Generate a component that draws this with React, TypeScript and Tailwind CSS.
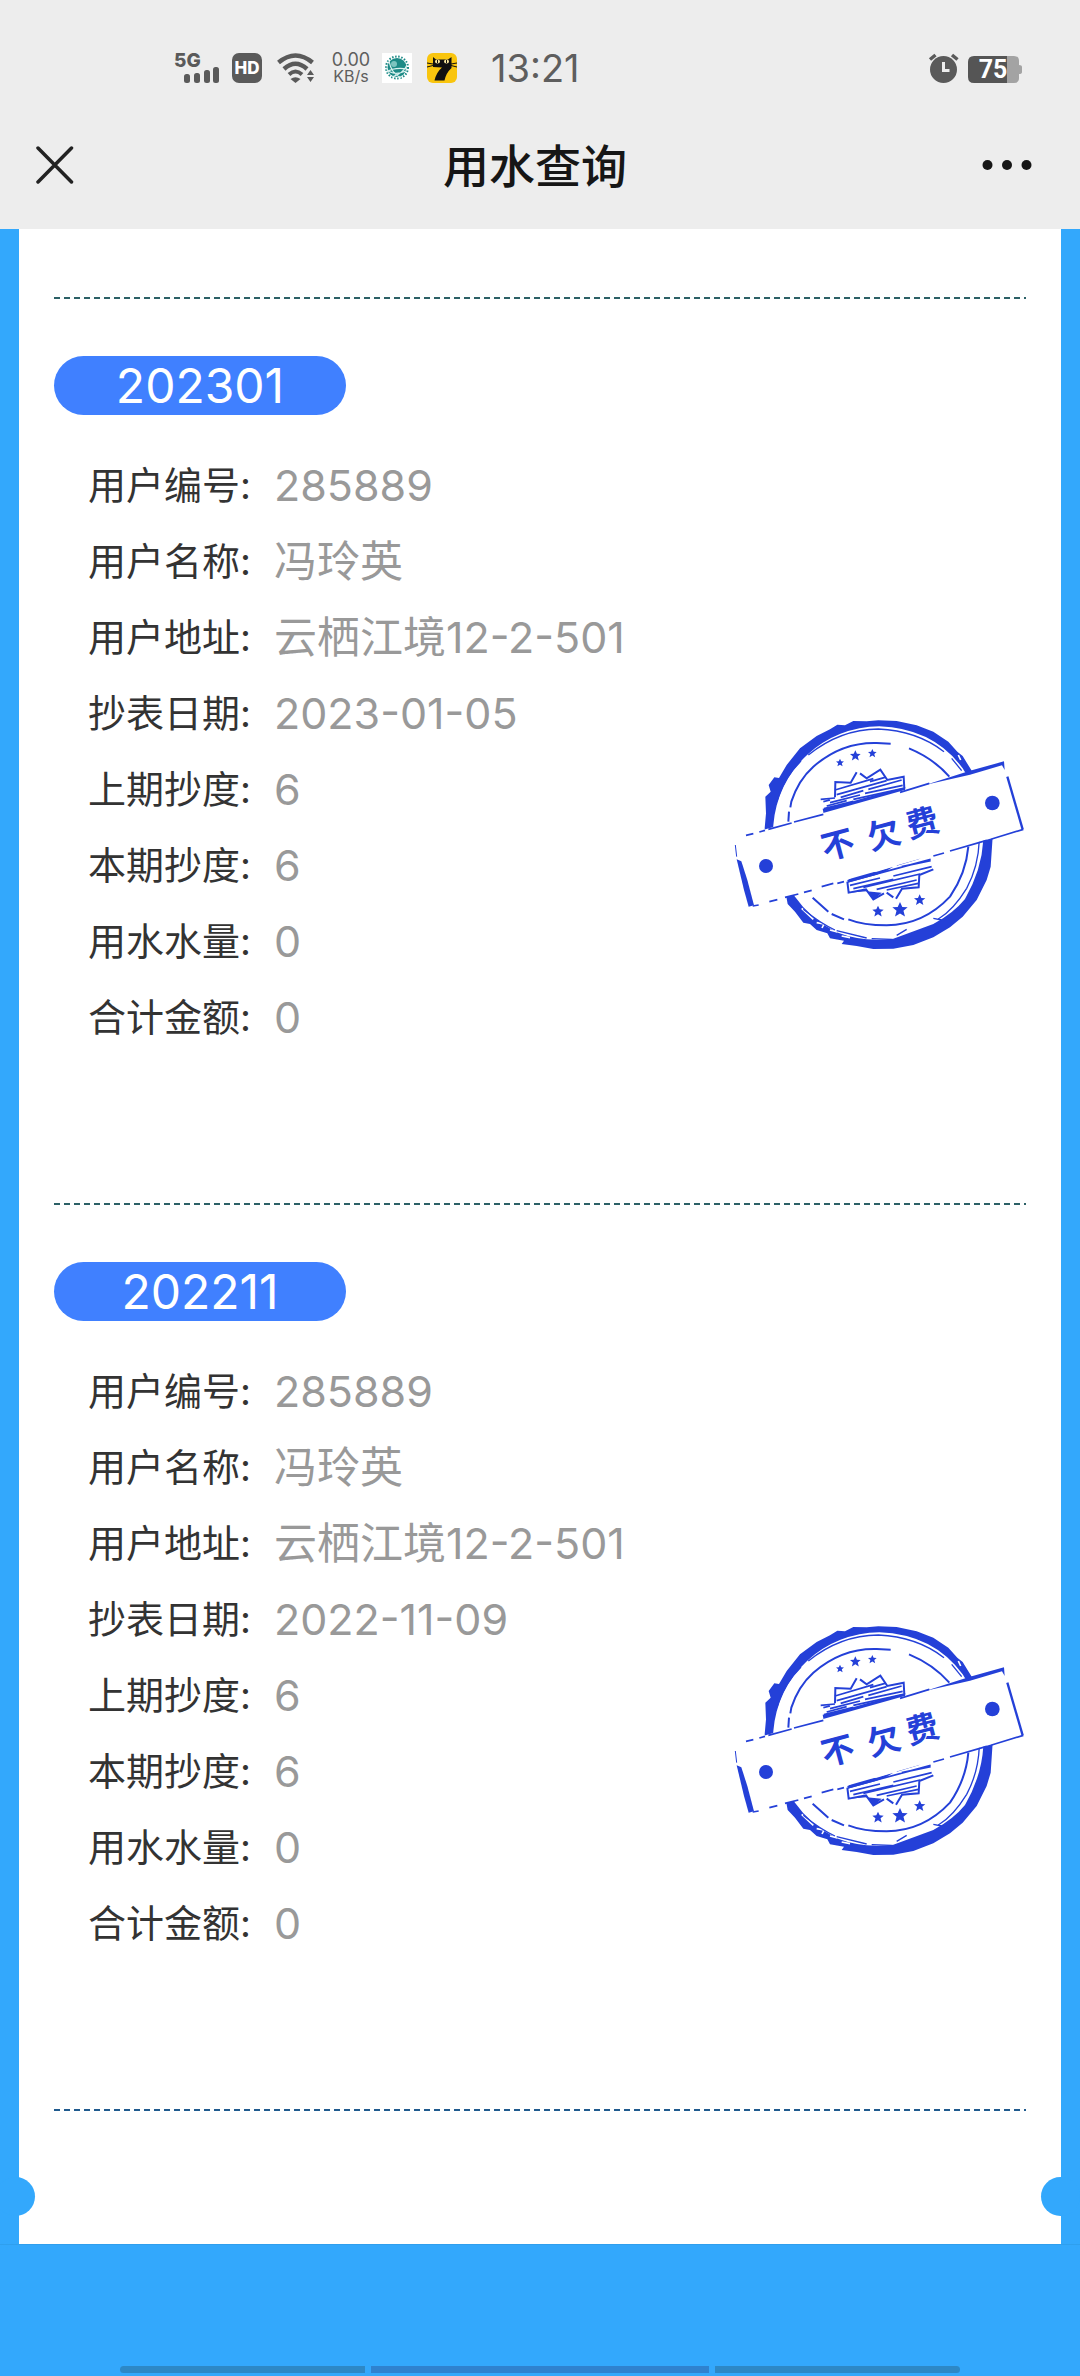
const bills = [
  {
    month: "202301",
    rows: [
      { label: "用户编号", value: "285889" },
      { label: "用户名称", value: "冯玲英" },
      { label: "用户地址", value: "云栖江境12-2-501" },
      { label: "抄表日期", value: "2023-01-05" },
      { label: "上期抄度", value: "6" },
      { label: "本期抄度", value: "6" },
      { label: "用水水量", value: "0" },
      { label: "合计金额", value: "0" },
    ],
  },
  {
    month: "202211",
    rows: [
      { label: "用户编号", value: "285889" },
      { label: "用户名称", value: "冯玲英" },
      { label: "用户地址", value: "云栖江境12-2-501" },
      { label: "抄表日期", value: "2022-11-09" },
      { label: "上期抄度", value: "6" },
      { label: "本期抄度", value: "6" },
      { label: "用水水量", value: "0" },
      { label: "合计金额", value: "0" },
    ],
  },
];

function StatusBar() {
  return (
    <div className="flex items-center justify-between pt-[53px] pl-[174px] pr-[58px] text-[#5e5e5e]">
      <div className="flex items-center h-[30px]">
        <svg className="overflow-visible" width="46" height="30" viewBox="0 0 46 30" fill="#5a5a5a">
          <text x="0" y="14" fontSize="19" fontWeight="800" fontFamily="Inter, sans-serif">5G</text>
          <rect x="10" y="21" width="6" height="9" rx="2.5" />
          <rect x="20" y="20" width="6" height="10" rx="2.5" />
          <rect x="30" y="17" width="6" height="13" rx="2.5" />
          <rect x="39" y="14" width="6" height="16" rx="2.5" />
        </svg>
        <svg className="ml-3" width="30" height="30" viewBox="0 0 30 30">
          <rect width="30" height="30" rx="7" fill="#5a5a5a" />
          <text x="15" y="21" textAnchor="middle" fontSize="17" fontWeight="800" fill="#fff" fontFamily="Inter, sans-serif">HD</text>
        </svg>
        <svg className="ml-[15px]" width="38" height="30" viewBox="0 0 38 30" fill="none" stroke="#5a5a5a">
          <path d="M1.500 9.500Q18.500 -4.500 35.500 9.500" strokeWidth="4.500" />
          <path d="M7 16Q18.500 5.500 30 16" strokeWidth="4.500" />
          <path d="M12 21.500Q18.500 15.500 25 21.500" strokeWidth="4" />
          <path d="M13.500 26Q18.500 22.500 23.500 26L18.500 30Z" fill="#5a5a5a" stroke="none" />
          <path d="M33.500 17L37 22H30ZM33.500 29L37 24H30Z" fill="#5a5a5a" stroke="none" />
        </svg>
        <div className="ml-4 w-[40px] flex flex-col text-center font-['Inter',sans-serif]">
          <span className="text-[18px] leading-[16px]">0.00</span>
          <span className="text-[16px] leading-[16px]">KB/s</span>
        </div>
        <svg className="ml-[11px]" width="30" height="30" viewBox="0 0 30 30">
          <rect width="30" height="30" fill="#fff" />
          <circle cx="15" cy="14.500" r="9.500" fill="#1c8a86" />
          <circle cx="15" cy="14.500" r="11" fill="none" stroke="#1c8a86" strokeWidth="2" strokeDasharray="1.500 1.600" />
          <path d="M4 15Q10 24 24 18M7 8Q9 20 19 25M25 12Q22 20 10 24M5 19Q12 14 25 16" stroke="#d9f1ef" strokeWidth="1.200" fill="none" />
          <circle cx="12" cy="11" r="3" fill="#7cc4bf" />
        </svg>
        <svg className="ml-[15px]" width="30" height="30" viewBox="0 0 30 30">
          <rect width="30" height="30" rx="6" fill="#f9c50e" />
          {/* cat head and body */}
          <path d="M6 4L9 6.500H21L24.500 4V15Q19 20 17.500 27.500H7.500Q9.500 19 15 14.500L6 14Z" fill="#111" />
          <path d="M0 10L6 11M0 14L6 12.500M30 10L24 11M30 14L24 12.500" stroke="#111" strokeWidth="1" />
          <ellipse cx="10.500" cy="8.500" rx="2.500" ry="2" fill="#fbe9a0" />
          <ellipse cx="19.500" cy="8.500" rx="2.500" ry="2" fill="#fbe9a0" />
          <path d="M10.500 7V10M19.500 7V10" stroke="#111" strokeWidth="1" />
        </svg>
        <time className="ml-[34px] text-[38px] leading-[30px] font-normal font-['Inter',sans-serif]">13:21</time>
      </div>
      <div className="flex items-center gap-2">
        <svg width="32" height="30" viewBox="0 0 32 30">
          <circle cx="15.500" cy="16.500" r="13.500" fill="#5a5a5a" />
          <path d="M2 6.500L7.500 2M24 2L29.500 6.500" stroke="#5a5a5a" strokeWidth="3.500" />
          <path d="M15.500 9V17.500H21.500" stroke="#ededed" strokeWidth="3" fill="none" />
        </svg>
        <svg width="54" height="30" viewBox="0 0 54 30">
          <path d="M38 3H46Q51 3 51 8V12Q54 12 54 14V19Q54 21 51 21V25Q51 30 46 30H38Z" fill="#a3a3a3" />
          <path d="M6 3H39V30H6Q0 30 0 24V9Q0 3 6 3Z" fill="#555" />
          <text x="25" y="25" textAnchor="middle" fontSize="25" fontWeight="700" fill="#fff" fontFamily="Roboto, sans-serif">75</text>
        </svg>
      </div>
    </div>
  );
}

function TitleBar() {
  return (
    <div className="flex items-center justify-between px-9 pt-[50px] pb-[30px]">
      <button aria-label="关闭" className="w-[54px]">
        <svg width="38" height="40" viewBox="0 0 38 40" stroke="#222" strokeWidth="3.500" strokeLinecap="round">
          <path d="M2 2L35.500 36M35.500 2L2 36" />
        </svg>
      </button>
      <h1 className="text-[46px] leading-[66px] font-medium text-[#161616]">用水查询</h1>
      <button aria-label="更多" className="w-16 flex justify-end">
        <svg width="62" height="12" viewBox="0 0 62 12" fill="#161616">
          <circle cx="5.500" cy="5" r="5" />
          <circle cx="25" cy="5" r="5" />
          <circle cx="44.500" cy="5" r="5" />
        </svg>
      </button>
    </div>
  );
}

const STAR = "M0 -10L3 -3.500L10 -3L4.500 1.500L6.500 9L0 5L-6.500 9L-4.500 1.500L-10 -3L-3 -3.500Z";

function Stamp() {
  return (
    <svg className="shrink-0" width="306" height="270" viewBox="0 0 918 810" fill="none" stroke="#2440d8">
      {/* outer ring, thicker on the left and at the bottom */}
      <path
        fill="#2440d8"
        stroke="none"
        fillRule="evenodd"
        d="M475 61L530 63L590 76L640 95L685 125L712 155L728 168L745 196L757 215L790 290L808 360L818 410L812 500L800 540L770 600L728 650L690 682L640 712L580 735L520 746L460 747L410 738L365 732L372 722L330 715L322 700L290 690L270 672L250 668L225 635L203 612L198 585L150 460L134 385L138 340L136 290L152 275L146 255L163 232L177 234L200 195L240 145L290 108L330 88L352 74L375 76L400 63L440 64ZM478 79A320 320 0 0 0 160 375A320 320 0 0 0 225 590Q270 655 350 697Q430 728 520 716L640 672Q700 640 735 597Q785 510 790 420Q790 300 728 205Q640 85 478 79Z"
      />
      <path d="M245 625L280 658M290 668L312 672L306 684M330 690L352 696M365 708L390 713M715 165L722 180" stroke="#fff" strokeWidth="5" />
      <path d="M265 165Q360 88 475 87Q590 92 672 155M695 175L725 212M243 183Q190 235 172 300M778 420Q775 500 740 565Q700 630 655 657M250 628Q300 670 345 690M350 692L440 714M455 716L515 718M530 706L560 688M640 655L665 660" strokeWidth="4" />
      <path d="M205 365L207 335M211 322L214 305Q235 240 280 200Q365 126 470 129L512 131M567 145Q640 175 688 230M745 440Q738 520 690 590Q610 675 500 676Q430 676 385 658M278 593L325 635M335 642L372 658" strokeWidth="6" />

      {/* upper burst */}
      <path d="M345 292L346 246L392 248L410 217M420 220L440 235L481 209L502 240L551 230L553 266" strokeWidth="6" />
      <path d="M302 298L345 294M310 305L330 300M345 270L460 236M350 284L500 242M362 292L430 272M445 268L545 240M330 308L420 285M435 280L548 256M320 318L380 302M400 298L550 265M450 245L495 232M312 326L400 304" strokeWidth="5" />
      <path d="M308 326L360 315L440 292L500 276L556 262L553 286L480 308L420 320L370 333L311 342Z" fill="#2440d8" stroke="none" />
      <path d="M370 338L455 324" strokeWidth="3" />

      {/* lower burst */}
      <path d="M382 545L386 578L438 568L460 598L492 580M500 578L520 592M528 596L546 566L596 562L598 525L640 508" strokeWidth="6" />
      <path d="M388 578L440 568L460 600L485 578L440 574Z" fill="#2440d8" stroke="none" />
      <path d="M382 540L420 520L470 515L520 500L500 512L470 524L384 548Z" fill="#2440d8" stroke="none" />
      <path d="M384 545L632 478M390 556L480 534M400 566L520 538M430 562L600 522M470 568L590 540M500 570L595 550M520 528L635 500M470 508L505 498M530 495L600 474M545 500L632 482" strokeWidth="5" />

      <g fill="#2440d8" stroke="none">
        <path transform="translate(360 188) scale(1.200)" d={STAR} />
        <path transform="translate(406 167) scale(1.600)" d={STAR} />
        <path transform="translate(457 160) scale(1.300)" d={STAR} />
        <path transform="translate(474 634) scale(1.700)" d={STAR} />
        <path transform="translate(540 629) scale(2.300)" d={STAR} />
        <path transform="translate(599 600) scale(1.700)" d={STAR} />
      </g>

      {/* banner */}
      <path d="M80 404L852 186L910 388L98 620L48 450Z" fill="#fff" stroke="none" />
      <path d="M78 406L100 401M118 396L135 391M145 388L215 369M222 366L310 343M540 277L628 250M98 618L116 615M148 605L172 599M195 592L235 582M252 577L275 571M305 560L340 550M352 550L372 545M640 468L672 459M690 453L800 421M815 417L910 388" strokeWidth="5" />
      <path d="M618 254L750 212L852 184L854 210L846 196L750 224Z" fill="#2440d8" stroke="none" />
      <path d="M862 230L908 388" strokeWidth="7" />
      <path d="M50 478L64 484L82 540L102 616L86 620L72 570Z" fill="#2440d8" stroke="none" />
      <path d="M46 435L50 470" strokeWidth="3" />
      <circle cx="817" cy="309" r="22" fill="#2440d8" stroke="none" />
      <circle cx="138" cy="498" r="21" fill="#2440d8" stroke="none" />
      <g fill="#2440d8" stroke="none" fontSize="98" fontWeight="700" textAnchor="middle" fontFamily="'Noto Sans CJK SC', sans-serif">
        <text transform="translate(362 468) rotate(-15)">不</text>
        <text transform="translate(500 438) rotate(-15)">欠</text>
        <text transform="translate(616 403) rotate(-15)">费</text>
      </g>
    </svg>
  );
}

function Divider({ last = false }: { last?: boolean }) {
  return (
    <hr
      className={
        last
          ? "h-0.5 border-0 bg-[repeating-linear-gradient(90deg,#1f5a8e_0px,#1f5a8e_6px,transparent_6px,transparent_10px)]"
          : "h-0.5 border-0 bg-[repeating-linear-gradient(90deg,#2b6066_0px,#2b6066_6px,transparent_6px,transparent_10px)]"
      }
    />
  );
}

export default function App() {
  return (
    <div className="min-h-screen flex flex-col bg-[#33a8fc] font-['Inter','Noto_Sans_CJK_SC',sans-serif]">
      <header className="bg-[#ededed]">
        <StatusBar />
        <TitleBar />
      </header>

      <main className="relative mx-[19px] bg-white px-[35px] pt-[68px] pb-[133px]">
        {bills.map((bill) => (
          <section key={bill.month}>
            <Divider />
            <h2 className="mt-[57px] w-[292px] rounded-full bg-[#4080ff] text-center text-[48px] leading-[59px] font-normal text-white">{bill.month}</h2>
            <div className="mt-8 mb-[148px] flex items-start justify-between">
              <dl className="pl-[34px]">
                {bill.rows.map((row) => (
                  <div key={row.label} className="flex items-center whitespace-nowrap leading-[76px]">
                    <dt className="w-[186px] text-[38px] text-[#333]">{row.label}:</dt>
                    <dd className="text-[43px] text-[#999]">{row.value}</dd>
                  </div>
                ))}
              </dl>
              <div className="mt-[253px]">
                <Stamp />
              </div>
            </div>
          </section>
        ))}
        <Divider last />
        <span className="absolute bottom-7 -left-[23px] size-[39px] rounded-full bg-[#33a8fc]" />
        <span className="absolute bottom-7 -right-[19px] size-[39px] rounded-full bg-[#33a8fc]" />
      </main>

      <footer className="flex flex-1 items-end justify-center gap-1.5 border-t border-[#2f9fee] px-[120px] pt-[121px] pb-[3px]">
        <span className="h-[7px] flex-[245] rounded-l-full bg-[#2d88c6]" />
        <span className="h-[7px] flex-[338] bg-[#2f82cf]" />
        <span className="h-[7px] flex-[245] rounded-r-full bg-[#2d88c6]" />
      </footer>
    </div>
  );
}
